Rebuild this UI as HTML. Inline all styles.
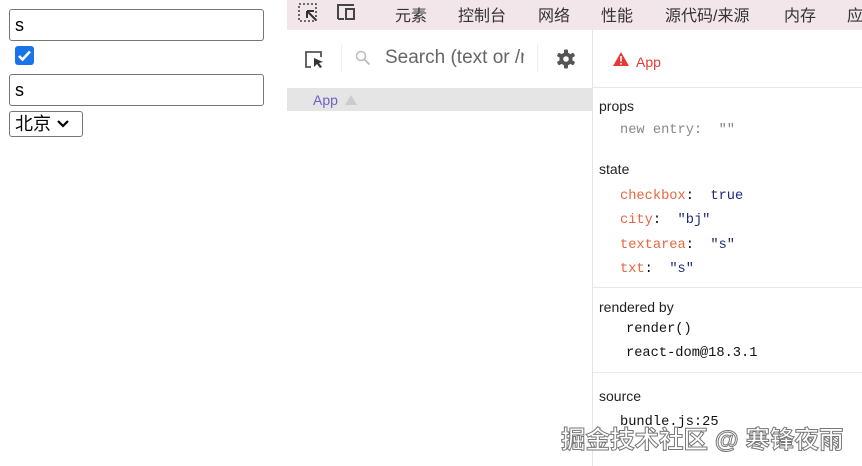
<!DOCTYPE html><html><head><meta charset="utf-8"><style>
body{margin:0;width:862px;height:466px;background:#fff;position:relative;overflow:hidden;font-family:"Liberation Sans","Noto Sans CJK SC",sans-serif}
.a{position:absolute;white-space:pre}
.inp{position:absolute;left:9px;width:253px;height:30px;border:1px solid #767676;border-radius:3px;font-size:18px;line-height:30px;padding-left:5px;box-sizing:border-box;width:255px}
.mono{font-family:"Liberation Mono","DejaVu Sans Mono",monospace;font-size:13.7px}
.k{color:#e5683d}.v{color:#1e2a78}
.t{position:absolute;top:2px;font-size:16px;color:#333}
</style></head><body>
<div class="inp" style="top:9px;height:32px">s</div>
<div class="a" style="left:15px;top:46px;width:19px;height:19px;background:#1a73e8;border-radius:3px"><svg width="19" height="19"><path d="M4 10l3.5 3.5L15 5.5" stroke="#fff" stroke-width="2.6" fill="none"/></svg></div>
<div class="inp" style="top:74px;height:32px">s</div>
<div class="a" style="left:9px;top:111px;width:74px;height:26px;border:1px solid #767676;border-radius:3px;box-sizing:border-box;font-size:18px;line-height:24px;padding-left:5px">北京 <svg width="14" height="10" style="vertical-align:1px"><path d="M2 2l5 5 5-5" stroke="#000" stroke-width="2.2" fill="none"/></svg></div>

<div class="a" style="left:287px;top:0;width:575px;height:30px;background:#f2e6ea"></div>
<svg class="a" style="left:298px;top:2px" width="60" height="22"><rect x="1" y="2" width="17" height="17" fill="none" stroke="#444" stroke-width="1.6" stroke-dasharray="2 2"/><path d="M9 9l9 9M9 9v7M9 9h7" stroke="#333" stroke-width="2" fill="none"/><path d="M40 17V3h16M40 17h6" stroke="#444" stroke-width="2" fill="none"/><rect x="48" y="7" width="8" height="10" fill="none" stroke="#444" stroke-width="2"/></svg>
<div class="t" style="left:395px">元素</div>
<div class="t" style="left:458px">控制台</div>
<div class="t" style="left:538px">网络</div>
<div class="t" style="left:601px">性能</div>
<div class="t" style="left:665px">源代码/来源</div>
<div class="t" style="left:784px">内存</div>
<div class="t" style="left:847px">应</div>

<div class="a" style="left:592px;top:30px;width:1px;height:436px;background:#e4e4e4"></div>
<svg class="a" style="left:303px;top:49px" width="24" height="22"><path d="M8 18H3V3h15v5" stroke="#555" stroke-width="1.8" fill="none"/><path d="M11 9l9 4-4 1 3 4-2 1-3-4-3 3z" fill="#333"/></svg>
<div class="a" style="left:341px;top:44px;width:1px;height:28px;background:#eee"></div>
<svg class="a" style="left:355px;top:50px" width="16" height="16"><circle cx="6" cy="6" r="4.5" stroke="#bbb" stroke-width="1.5" fill="none"/><path d="M9.5 9.5l5 5" stroke="#bbb" stroke-width="1.8"/></svg>
<div class="a" style="left:385px;top:47px;font-size:19px;color:#666;width:139px;overflow:hidden">Search (text or /r</div>
<div class="a" style="left:537px;top:44px;width:1px;height:28px;background:#eee"></div>
<svg class="a" style="left:556px;top:49px" width="20" height="20" viewBox="0 0 20 20"><g fill="#555"><circle cx="10" cy="10" r="6.5"/><rect x="8" y="0.5" width="4" height="19" rx="1"/><rect x="8" y="0.5" width="4" height="19" rx="1" transform="rotate(60 10 10)"/><rect x="8" y="0.5" width="4" height="19" rx="1" transform="rotate(120 10 10)"/></g><circle cx="10" cy="10" r="2.8" fill="#fff"/></svg>
<div class="a" style="left:287px;top:88px;width:305px;height:23px;background:#e5e5e5"></div>
<div class="a" style="left:313px;top:92px;font-size:14px;color:#6c5fc7">App</div>
<svg class="a" style="left:344px;top:94px" width="14" height="12"><path d="M7 1l6 10H1z" fill="#ccc"/></svg>

<svg class="a" style="left:612px;top:51px" width="18" height="16"><path d="M9 1l8 14H1z" fill="#e53935"/><rect x="8.2" y="5" width="1.6" height="5.5" fill="#fff"/><rect x="8.2" y="12" width="1.6" height="1.6" fill="#fff"/></svg>
<div class="a" style="left:636px;top:54px;font-size:14px;color:#e53935">App</div>
<div class="a" style="left:593px;top:87px;width:269px;height:1px;background:#e8e8e8"></div>
<div class="a" style="left:599px;top:98px;font-size:14px;color:#222">props</div>
<div class="a mono" style="left:620px;top:123px;color:#888">new entry:  ""</div>
<div class="a" style="left:599px;top:161px;font-size:14px;color:#222">state</div>
<div class="a mono" style="left:620px;top:189px"><span class="k">checkbox</span>:  <span class="v">true</span></div>
<div class="a mono" style="left:620px;top:213px"><span class="k">city</span>:  <span class="v">"bj"</span></div>
<div class="a mono" style="left:620px;top:238px"><span class="k">textarea</span>:  <span class="v">"s"</span></div>
<div class="a mono" style="left:620px;top:262px"><span class="k">txt</span>:  <span class="v">"s"</span></div>
<div class="a" style="left:593px;top:287px;width:269px;height:1px;background:#e8e8e8"></div>
<div class="a" style="left:599px;top:299px;font-size:14px;color:#222">rendered by</div>
<div class="a mono" style="left:626px;top:322px;color:#111">render()</div>
<div class="a mono" style="left:626px;top:346px;color:#111">react-dom@18.3.1</div>
<div class="a" style="left:593px;top:372px;width:269px;height:1px;background:#e8e8e8"></div>
<div class="a" style="left:599px;top:388px;font-size:14px;color:#222">source</div>
<div class="a mono" style="left:620px;top:415px;color:#111">bundle.js:25</div>
<div class="a" style="left:561px;top:421px;font-size:24.5px;color:#fff;-webkit-text-stroke:1px #777;font-weight:bold">掘金技术社区 @ 寒锋夜雨</div>
</body></html>
